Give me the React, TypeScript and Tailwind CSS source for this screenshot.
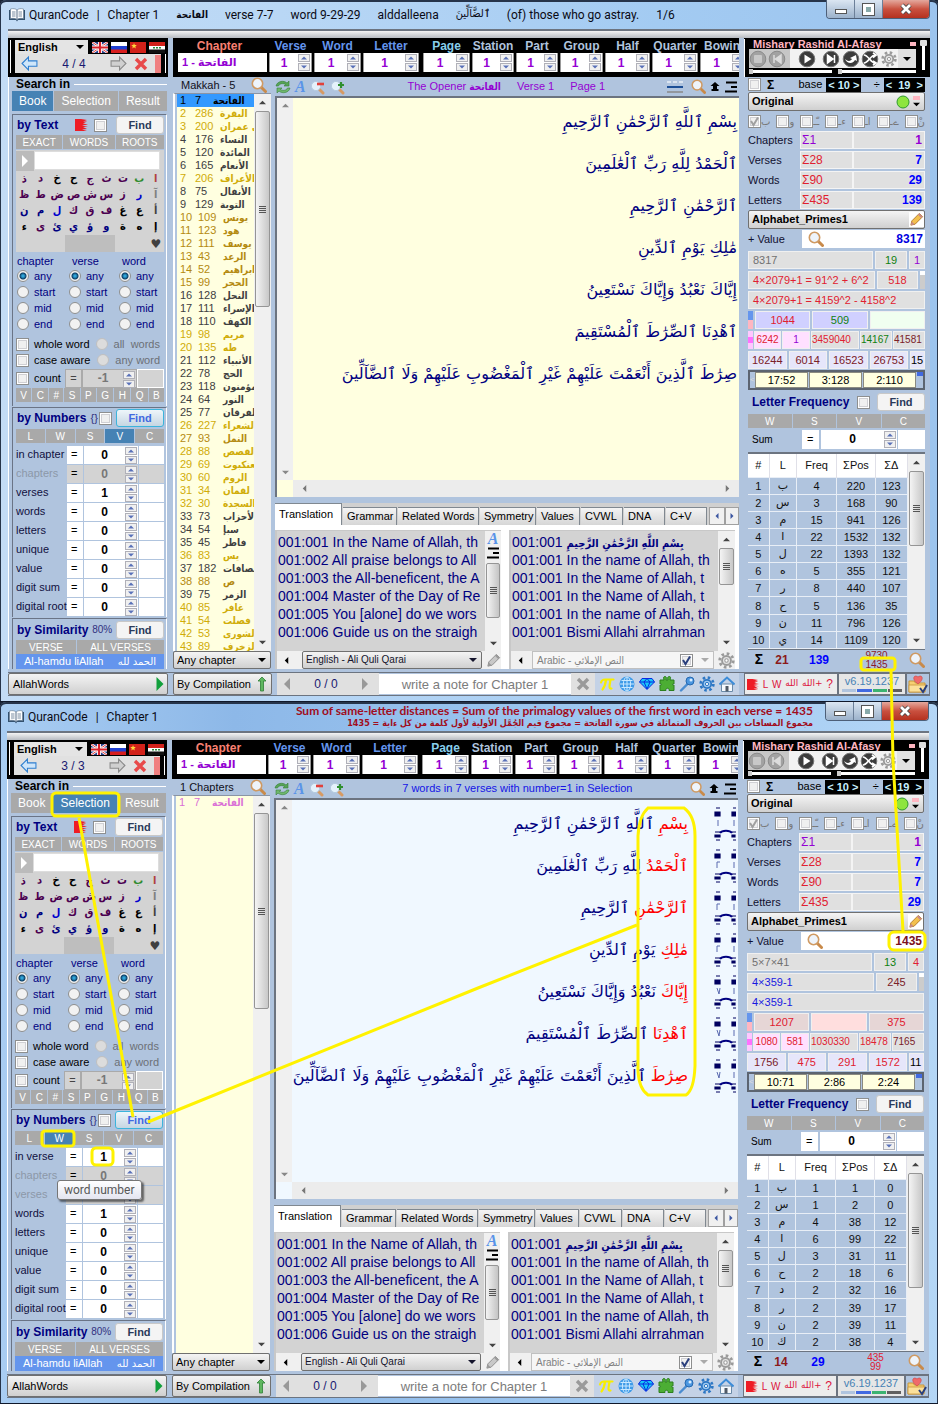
import React from "react";

type Verse = { first: string; rest: string };

const verses: Verse[] = [
  { first: "بِسْمِ", rest: "ٱللَّهِ ٱلرَّحْمَٰنِ ٱلرَّحِيمِ" },
  { first: "ٱلْحَمْدُ", rest: "لِلَّهِ رَبِّ ٱلْعَٰلَمِينَ" },
  { first: "ٱلرَّحْمَٰنِ", rest: "ٱلرَّحِيمِ" },
  { first: "مَٰلِكِ", rest: "يَوْمِ ٱلدِّينِ" },
  { first: "إِيَّاكَ", rest: "نَعْبُدُ وَإِيَّاكَ نَسْتَعِينُ" },
  { first: "ٱهْدِنَا", rest: "ٱلصِّرَٰطَ ٱلْمُسْتَقِيمَ" },
  { first: "صِرَٰطَ", rest: "ٱلَّذِينَ أَنْعَمْتَ عَلَيْهِمْ غَيْرِ ٱلْمَغْضُوبِ عَلَيْهِمْ وَلَا ٱلضَّآلِّينَ" },
];

type Tone = "sel" | "gold" | "amber" | "dark" | "pink";
type Chapter = [number, number, string, Tone];

const toneClass: Record<Tone, string> = {
  sel: "bg-[#3399ff] text-black",
  gold: "text-[#d0ac08]",
  amber: "text-[#b48a10]",
  dark: "text-[#404040]",
  pink: "text-[#da70d6]",
};

const allChapters: Chapter[] = [
  [1, 7, "الفاتحة", "sel"], [2, 286, "البقرة", "gold"], [3, 200, "آل عمران", "gold"],
  [4, 176, "النساء", "dark"], [5, 120, "المائدة", "dark"], [6, 165, "الأنعام", "dark"],
  [7, 206, "الأعراف", "gold"], [8, 75, "الأنفال", "dark"], [9, 129, "التوبة", "dark"],
  [10, 109, "يونس", "amber"], [11, 123, "هود", "amber"], [12, 111, "يوسف", "amber"],
  [13, 43, "الرعد", "amber"], [14, 52, "ابراهيم", "amber"], [15, 99, "الحجر", "amber"],
  [16, 128, "النحل", "dark"], [17, 111, "الإسراء", "dark"], [18, 110, "الكهف", "dark"],
  [19, 98, "مريم", "gold"], [20, 135, "طه", "gold"], [21, 112, "الأنبياء", "dark"],
  [22, 78, "الحج", "dark"], [23, 118, "المؤمنون", "dark"], [24, 64, "النور", "dark"],
  [25, 77, "الفرقان", "dark"], [26, 227, "الشعراء", "gold"], [27, 93, "النمل", "amber"],
  [28, 88, "القصص", "gold"], [29, 69, "العنكبوت", "gold"], [30, 60, "الروم", "gold"],
  [31, 34, "لقمان", "gold"], [32, 30, "السجدة", "gold"], [33, 73, "الأحزاب", "dark"],
  [34, 54, "سبإ", "dark"], [35, 45, "فاطر", "dark"], [36, 83, "يس", "gold"],
  [37, 182, "الصافات", "dark"], [38, 88, "ص", "amber"], [39, 75, "الزمر", "dark"],
  [40, 85, "غافر", "gold"], [41, 54, "فصلت", "gold"], [42, 53, "الشورى", "gold"],
  [43, 89, "الزخرف", "gold"],
];

type NumRow = { label: string; value: string; off?: boolean };
type Cell = { t: string; c: string };

type Win = {
  id: string;
  top: boolean;
  history: string;
  scope: string;
  unit: string;
  legend: string;
  chapters: Chapter[];
  numbers: NumRow[];
  stats: [string, string, string, string][];
  value: string;
  factors: Cell[][];
  refs: string[];
  freq: [string, number, number, number][];
  totals: [string, string, string, string];
};

const red = "text-[#e02030]";
const green = "text-[#108010]";
const blue = "text-[#1818e0]";
const brown = "text-[#7a2028]";
const grayCell = "bg-[#e0e0e0] ";
const lav = "bg-[#e6e6fa] ";

const win1: Win = {
  id: "w1",
  top: true,
  history: "4 / 4",
  scope: "Book",
  unit: "V",
  legend: "Makkah - 5",
  chapters: allChapters,
  numbers: [
    { label: "in chapter", value: "0" }, { label: "chapters", value: "0", off: true },
    { label: "verses", value: "1" }, { label: "words", value: "0" }, { label: "letters", value: "0" },
    { label: "unique", value: "0" }, { label: "value", value: "0" }, { label: "digit sum", value: "0" },
    { label: "digital root", value: "0" },
  ],
  stats: [
    ["Chapters", "Σ1", "1", "text-[#9400d3]"], ["Verses", "Σ28", "7", "text-[#0000ff]"],
    ["Words", "Σ90", "29", "text-[#0000ff]"], ["Letters", "Σ435", "139", "text-[#0000ff]"],
  ],
  value: "8317",
  factors: [
    [{ t: "8317", c: grayCell + "text-[#707070]" }, { t: "19", c: grayCell + green }, { t: "1", c: grayCell + "text-[#9400d3]" }],
    [{ t: "4×2079+1 = 91^2 + 6^2", c: grayCell + red }, { t: "518", c: grayCell + red }],
    [{ t: "4×2079+1 = 4159^2 - 4158^2", c: grayCell + red }],
    [{ t: "1044", c: "bg-[#d0d0ff] " + red }, { t: "509", c: "bg-[#d0d0ff] " + green }, { t: "", c: "bg-[#f0fff0]" }],
    [{ t: "6242", c: "bg-[#ffe0ff] " + red }, { t: "1", c: "bg-[#ffe0ff] text-[#9400d3]" }, { t: "3459040", c: grayCell + red }, { t: "14167", c: grayCell + green }, { t: "41581", c: grayCell + brown }],
    [{ t: "16244", c: lav + brown }, { t: "6014", c: lav + brown }, { t: "16523", c: lav + brown }, { t: "26753", c: lav + brown }, { t: "15", c: lav + "text-black" }],
  ],
  refs: ["17:52", "3:128", "2:110"],
  freq: [["ب", 4, 220, 123], ["س", 3, 168, 90], ["م", 15, 941, 126], ["ا", 22, 1532, 132], ["ل", 22, 1393, 132], ["ه", 5, 355, 121], ["ر", 8, 440, 107], ["ح", 5, 136, 35], ["ن", 11, 796, 126], ["ي", 14, 1109, 120]],
  totals: ["21", "139", "9730", "1435"],
};

const win2: Win = {
  id: "w2",
  top: false,
  history: "3 / 3",
  scope: "Selection",
  unit: "W",
  legend: "1 Chapters",
  chapters: [[1, 7, "الفاتحة", "pink"]],
  numbers: [
    { label: "in verse", value: "1" }, { label: "chapters", value: "0", off: true },
    { label: "verses", value: "0", off: true }, { label: "words", value: "1" }, { label: "letters", value: "0" },
    { label: "unique", value: "0" }, { label: "value", value: "0" }, { label: "digit sum", value: "0" },
    { label: "digital root", value: "0" },
  ],
  stats: [
    ["Chapters", "Σ1", "1", "text-[#9400d3]"], ["Verses", "Σ28", "7", "text-[#0000ff]"],
    ["Words", "Σ90", "7", "text-[#0000ff]"], ["Letters", "Σ435", "29", "text-[#0000ff]"],
  ],
  value: "1435",
  factors: [
    [{ t: "5×7×41", c: grayCell + "text-[#707070]" }, { t: "13", c: grayCell + green }, { t: "4", c: grayCell + red }],
    [{ t: "4×359-1", c: grayCell + blue }, { t: "245", c: grayCell + brown }],
    [{ t: "4×359-1", c: grayCell + blue }],
    [{ t: "1207", c: "bg-[#e6d6d6] " + red }, { t: "", c: "bg-[#ffdede]" }, { t: "375", c: "bg-[#e6d6d6] " + red }],
    [{ t: "1080", c: "bg-[#ffe0ff] " + red }, { t: "581", c: "bg-[#ffe0ff] " + red }, { t: "1030330", c: grayCell + red }, { t: "18478", c: grayCell + red }, { t: "7165", c: grayCell + brown }],
    [{ t: "1756", c: lav + brown }, { t: "475", c: lav + red }, { t: "291", c: lav + red }, { t: "1572", c: lav + red }, { t: "11", c: lav + "text-black" }],
  ],
  refs: ["10:71", "2:86", "2:24"],
  freq: [["ب", 1, 1, 0], ["س", 1, 2, 0], ["م", 4, 38, 12], ["ا", 6, 99, 22], ["ل", 3, 31, 11], ["ح", 2, 18, 6], ["د", 2, 32, 16], ["ر", 2, 39, 17], ["ن", 2, 39, 11], ["ك", 2, 38, 4]],
  totals: ["14", "29", "435", "99"],
};

/* ---------- icons ---------- */

const Magnifier = ({ className = "size-4" }: { className?: string }) => (
  <svg viewBox="0 0 16 16" className={className} aria-hidden="true">
    <path d="M10 10l4.5 4.5" stroke="#c98a4a" strokeWidth="3" strokeLinecap="round" />
    <circle cx="6.5" cy="6.5" r="5.2" fill="#eef4fb" stroke="#cf9a63" strokeWidth="1.6" />
  </svg>
);

const ZoomGlyph = ({ plus }: { plus?: boolean }) => (
  <svg viewBox="0 0 16 16" className="size-4" aria-hidden="true">
    <path d="M9 10l4 4" stroke="#d79a63" strokeWidth="3" strokeLinecap="round" />
    <circle cx="6" cy="7" r="4.6" fill="#e4f1fb" stroke="#b5cbe0" />
    {plus ? (
      <path d="M8 6h6M11 3v6" stroke="#2f8f2f" strokeWidth="2.2" />
    ) : (
      <path d="M7 5h7" stroke="#e2403a" strokeWidth="2.6" />
    )}
  </svg>
);

const Refresh = () => (
  <svg viewBox="0 0 16 16" className="size-4" aria-hidden="true">
    <path d="M1 7c1-5 8-6 11-3l2-2v5H9l1.600-1.500C8 4 4.500 4.500 3.500 7z" fill="#57a457" stroke="#37803b" strokeWidth=".6" />
    <path d="M15 9c-1 5-8 6-11 3l-2 2V9h5l-1.600 1.500C8 12 11.500 11.500 12.500 9z" fill="#6fb86c" stroke="#37803b" strokeWidth=".6" />
  </svg>
);

const LetterA = () => <span aria-hidden="true" className="font-['Liberation_Serif',serif] text-[16px] leading-4 font-bold text-[#5a94e8] italic">A</span>;

const Indent = () => (
  <svg viewBox="0 0 12 12" className="size-3" aria-hidden="true">
    <path d="M1 1.500h11M6 6h6M0 10.500h12" stroke="#000" strokeWidth="1.800" />
  </svg>
);

const Gear = ({ color = "#9a9a9a", className = "size-4", fill = "#e4e4e4" }: { color?: string; className?: string; fill?: string }) => (
  <svg viewBox="0 0 16 16" className={className} aria-hidden="true">
    <circle cx="8" cy="8" r="6.400" fill="none" stroke={color} strokeWidth="2.600" strokeDasharray="2.500 2.520" />
    <circle cx="8" cy="8" r="4.200" fill={fill} stroke={color} strokeWidth="1.800" />
    <circle cx="8" cy="8" r="1.600" fill="#fff" stroke={color} />
  </svg>
);

const Tri = ({ dir, className = "size-[7px]" }: { dir: "up" | "down" | "left" | "right"; className?: string }) => {
  const d = { up: "M0 6L4 2l4 4z", down: "M0 2l4 4 4-4z", left: "M6 0L2 4l4 4z", right: "M2 0l4 4-4 4z" }[dir];
  return (
    <svg viewBox="0 0 8 8" className={`shrink-0 ${className}`} fill="currentColor" aria-hidden="true">
      <path d={d} />
    </svg>
  );
};

const Pencil = ({ gray }: { gray?: boolean }) => (
  <svg viewBox="0 0 16 16" className="size-[15px]" aria-hidden="true">
    <path d="M2 14l1-4.500L11 1.500l3.500 3.500-8 8z" fill={gray ? "#c8c8c8" : "#f3c04e"} stroke={gray ? "#8c8c8c" : "#b27a2a"} />
    <path d="M2 14l1-4 3 3zM11 1.500l3.500 3.500-1.500 1.500L9.500 3z" fill={gray ? "#999" : "#c98a8a"} />
  </svg>
);

const Flag = ({ kind }: { kind: "uk" | "ru" | "cn" | "iq" }) => (
  <svg viewBox="0 0 16 11" className="h-[11px] w-4" aria-hidden="true">
    {kind === "uk" && (
      <>
        <rect width="16" height="11" fill="#27408b" />
        <path d="M0 0l16 11M16 0L0 11" stroke="#fff" strokeWidth="2.400" />
        <path d="M0 0l16 11M16 0L0 11" stroke="#d22" strokeWidth=".9" />
        <path d="M8 0v11M0 5.500h16" stroke="#fff" strokeWidth="4" />
        <path d="M8 0v11M0 5.500h16" stroke="#d8202a" strokeWidth="2.200" />
      </>
    )}
    {kind === "ru" && (
      <>
        <rect width="16" height="4" fill="#fff" />
        <rect y="4" width="16" height="4" fill="#1f3fd0" />
        <rect y="7.500" width="16" height="3.500" fill="#d81e1e" />
      </>
    )}
    {kind === "cn" && (
      <>
        <rect width="16" height="11" fill="#d2221a" />
        <path d="M4 1l.8 2 2 .1-1.500 1.300.5 2L4 5.300 2.300 6.400l.5-2L1.300 3.100l2-.1z" fill="#ffd83a" />
      </>
    )}
    {kind === "iq" && (
      <>
        <rect width="16" height="4" fill="#d2221a" />
        <rect y="4" width="16" height="4" fill="#fff" />
        <rect y="7.500" width="16" height="3.500" fill="#111" />
        <path d="M4 5.800h8" stroke="#2c8a3c" strokeWidth="1.500" strokeDasharray="2 1" />
      </>
    )}
  </svg>
);

const Arrow = ({ right, fill, stroke }: { right?: boolean; fill: string; stroke: string }) => (
  <svg viewBox="0 0 16 16" className="size-[17px]" aria-hidden="true">
    <path d={right ? "M15 8L9 2v3.500H1v5h8V14z" : "M1 8l6-6v3.500h8v5H7V14z"} fill={fill} stroke={stroke} />
  </svg>
);

const Cross = ({ color, className = "size-[14px]" }: { color: string; className?: string }) => (
  <svg viewBox="0 0 14 14" className={className} aria-hidden="true">
    <path d="M2 2l10 10M12 2L2 12" stroke={color} strokeWidth="3.400" />
  </svg>
);

const RedBadge = ({ className = "h-3 w-[13px]" }: { className?: string }) => (
  <svg viewBox="0 0 13 12" className={className} aria-hidden="true">
    <path d="M0 0h6l6 1-4 1.500h4L8 4.500l5 1-6 1 6 1.500H8l4 2-5 .5 5 1.500H0z" fill="#ee1c25" />
  </svg>
);

const MediaIcon = ({ kind, off }: { kind: "stop" | "prev" | "play" | "next" | "loop" | "mix"; off?: boolean }) => (
  <svg viewBox="0 0 18 18" className="size-[18px]" aria-hidden="true">
    <circle cx="9" cy="9" r="7.800" fill={off ? "#a2a2a2" : "#3c3c3c"} stroke={off ? "#8a8a8a" : "#777"} />
    {kind === "stop" && <rect x="5" y="5" width="8" height="8" rx="1" fill="#c8c8c8" />}
    {kind === "prev" && <path d="M6 5v8M13 5L7.500 9l5.500 4z" fill="#ddd" stroke="#ddd" strokeWidth="1.500" />}
    {kind === "play" && <path d="M6.500 4.500L13.500 9l-7 4.500z" fill="#fff" />}
    {kind === "next" && <path d="M12.500 5v8M5.500 5L11 9l-5.500 4z" fill="#fff" stroke="#fff" strokeWidth="1.500" />}
    {kind === "loop" && <path d="M3 9c3 3 6 2 7 0L8 8l6-3 1 6-2-1c-2 4-8 4-10-1z" fill="#fff" />}
    {kind === "mix" && <path d="M3 5c4 0 7 8 11 8M3 13c4 0 7-8 11-8M12 3l3 2-3 2.500M12 11l3 2-3 2" fill="none" stroke="#fff" strokeWidth="1.700" />}
  </svg>
);

const BookIcon = () => (
  <svg viewBox="0 0 16 14" className="h-[14px] w-4" aria-hidden="true">
    <path d="M0 2h16v10H9l-1 1.500L7 12H0z" fill="#33516e" />
    <path d="M1.500 1C4 .3 6.500.6 8 2v9.500C6.500 10.300 4 10 1.500 10.600zM14.500 1C12 .3 9.500.6 8 2v9.500c1.500-1.200 4-1.500 6.500-.9z" fill="#fff" stroke="#6d8299" strokeWidth=".7" />
    <path d="M3 4h3.500M3 6h3.500M3 8h3.500M9.500 4H13M9.500 6H13M9.500 8H13" stroke="#7a8da2" />
  </svg>
);

/* ---------- shared controls ---------- */

const raised = "border border-[#707070] rounded-[2px] bg-linear-to-b from-[#f4f4f4] to-[#d0d0d0]";

const Check = ({ label, on, off }: { label: string; on?: boolean; off?: boolean }) => (
  <span className="relative inline-flex size-[13px] shrink-0">
    <input type="checkbox" aria-label={label} defaultChecked={on} disabled={off} className="size-[13px] appearance-none border border-[#8e8f8f] bg-[#f0f0f0] shadow-[inset_0_0_0_1px_#fff,inset_0_0_0_2px_#d0d0d4]" />
    {on && (
      <svg viewBox="0 0 13 13" className="pointer-events-none absolute inset-0" aria-hidden="true">
        <path d="M3 6l2.500 4L10 2.500" fill="none" stroke={off ? "#a0a0a0" : "#2a3f7c"} strokeWidth="2" />
      </svg>
    )}
  </span>
);

const Spin = ({ label, value, off, color = "text-black" }: { label: string; value: string; off?: boolean; color?: string }) => (
  <div className={`flex h-full min-w-0 flex-1 items-stretch ${off ? "bg-[#d3d3d3]" : "bg-white"}`}>
    <input aria-label={label} defaultValue={value} disabled={off} className={`w-0 min-w-0 flex-1 bg-transparent text-center text-[12px] font-bold ${off ? "text-[#777]" : color}`} />
    <span className="flex w-[13px] shrink-0 flex-col gap-px py-px pr-px">
      <button aria-label={`${label} up`} className="flex flex-1 items-center justify-center border border-[#b0b0b8] bg-[#f0f0f0] text-[#5870b8]"><Tri dir="up" className="size-[6px]" /></button>
      <button aria-label={`${label} down`} className="flex flex-1 items-center justify-center border border-[#b0b0b8] bg-[#f0f0f0] text-[#5870b8]"><Tri dir="down" className="size-[6px]" /></button>
    </span>
  </div>
);

const Strip = ({ items, active, tall }: { items: string[]; active?: string; tall?: boolean }) => (
  <div className={`flex shrink-0 gap-px ${tall ? "h-5 text-[12px]" : "h-[14px] text-[10px]"}`}>
    {items.map((t) => (
      <button key={t} className={`flex flex-auto items-center justify-center overflow-hidden text-white ${t === active ? "bg-[#4682b4]" : "bg-[#a9a9a9]"}`}>{t}</button>
    ))}
  </div>
);

const FindButton = ({ hot }: { hot?: boolean }) => (
  <button className={`h-[18px] w-12 rounded-[3px] border text-[11px] font-bold ${hot ? "border-[#3cb4dc] bg-linear-to-b from-[#eef6fa] to-[#c6d6e2] text-[#4169e1]" : "border-[#c8c8c8] bg-[#f4f4f4] text-[#2a3a5a]"}`}>Find</button>
);

const ScrollBar = ({ thumb, className = "" }: { thumb: string; className?: string }) => (
  <div className={`flex w-[17px] shrink-0 flex-col items-center bg-[#f0f0f0] text-[#444] ${className}`} aria-hidden="true">
    <span className="flex h-[17px] items-center"><Tri dir="up" /></span>
    <span className={`flex w-[15px] flex-col items-center justify-center gap-px rounded-[2px] border border-[#959595] bg-linear-to-r from-[#f4f4f4] to-[#c8c8c8] ${thumb}`}>
      <i className="h-px w-[7px] bg-[#555]" /><i className="h-px w-[7px] bg-[#555]" /><i className="h-px w-[7px] bg-[#555]" /><i className="h-px w-[7px] bg-[#555]" />
    </span>
    <span className="mt-auto flex h-[17px] items-center"><Tri dir="down" /></span>
  </div>
);

const Combo = ({ label, value, className = "" }: { label: string; value: string; className?: string }) => (
  <div className={`relative flex items-center ${className}`}>
    <select aria-label={label} className="h-full w-full appearance-none bg-transparent pl-[3px] leading-none outline-none">
      <option>{value}</option>
    </select>
    <Tri dir="down" className="pointer-events-none absolute right-1 size-2" />
  </div>
);

/* ---------- title bar ---------- */

const TitleBar = ({ w }: { w: Win }) => (
  <header className="flex h-[29px] shrink-0 items-start">
    <div className="flex h-[29px] min-w-0 flex-1 items-center gap-[17px] pl-px font-['Roboto','DejaVu_Sans',sans-serif] text-[12px] whitespace-nowrap text-[#0a0a14]">
      <h1 className="flex items-center gap-2">
        <span className="flex items-center gap-1"><BookIcon />QuranCode</span>
        <span>|</span>
        <span>Chapter 1</span>
      </h1>
      {w.top ? (
        <>
          <span className="font-['DejaVu_Sans_Condensed','DejaVu_Sans',sans-serif] text-[10px] font-bold">الفاتحة</span>
          <span>verse 7-7</span>
          <span>word 9-29-29</span>
          <span>alddalleena</span>
          <span className="font-['DejaVu_Sans_Condensed','DejaVu_Sans',sans-serif] text-[11px]">ٱلضَّآلِّينَ</span>
          <span>(of) those who go astray.</span>
          <span>1/6</span>
        </>
      ) : (
        <div className="flex flex-1 flex-col items-end pr-3 font-bold text-[#a00d20]">
          <span className="font-['Lato',sans-serif] text-[12px] leading-[13px]">Sum of same-letter distances = Sum of the primalogy values of the first word in each verse = 1435</span>
          <span dir="rtl" className="font-['DejaVu_Sans_Condensed','DejaVu_Sans',sans-serif] text-[9px] leading-[13px]">مجموع المسافات بين الحروف المتماثلة في سورة الفاتحة = مجموع قيم الجُمَّل الأولية لأول كلمة من كل ءاية = 1435</span>
        </div>
      )}
    </div>
    <div className="flex h-[19px] shrink-0 overflow-hidden rounded-b-[4px] border border-t-0 border-[#4d5f78]">
      <button aria-label="Minimize" className="flex w-7 items-center justify-center border-r border-[#6c7f98] bg-linear-to-b from-[#dbe6f2] to-[#9cb2cb]"><i className="mt-1 h-[5px] w-3 border border-[#555] bg-white" /></button>
      <button aria-label="Maximize" className="flex w-7 items-center justify-center border-r border-[#6c7f98] bg-linear-to-b from-[#dbe6f2] to-[#9cb2cb]"><i className="size-[11px] border-[3px] border-white bg-[#8aa] outline outline-[#555]" /></button>
      <button aria-label="Close" className="flex w-[46px] items-center justify-center bg-linear-to-b from-[#e3a89e] via-[#c9503f] to-[#b5311f]">
        <svg viewBox="0 0 14 12" className="h-3 w-[14px]" aria-hidden="true"><path d="M3 2l8 8M11 2l-8 8" stroke="#444" strokeWidth="4.500" /><path d="M3 2l8 8M11 2l-8 8" stroke="#fff" strokeWidth="2.800" /></svg>
      </button>
    </div>
  </header>
);

/* ---------- black tool row ---------- */

const navFields: [string, string, string][] = [
  ["Verse", "w-[45px]", "text-[#6495ed]"], ["Word", "w-[49px]", "text-[#6495ed]"], ["Letter", "w-[58px]", "text-[#6495ed]"],
  ["Page", "w-[49px]", "text-[#87ceeb]"], ["Station", "w-[44px]", "text-[#b0c4de]"], ["Part", "w-[44px]", "text-[#b0c4de]"],
  ["Group", "w-[45px]", "text-[#b0c4de]"], ["Half", "w-[47px]", "text-[#b0c4de]"], ["Quarter", "w-[48px]", "text-[#b0c4de]"],
  ["Bowing", "w-[48px]", "text-[#b0c4de]"],
];

const ToolRow = ({ w }: { w: Win }) => (
  <div className="flex h-[39px] shrink-0 gap-[5px]">
    <div className="w-40 shrink-0 bg-black p-[2px] pb-1">
      <div className="flex h-[14px] items-center gap-[3px] border-l border-white pl-1">
        <Combo label="Language" value="English" className="h-full w-[73px] bg-[#e4e4e4] text-[11px] font-bold" />
        <span className="flex gap-[3px] pl-px"><Flag kind="uk" /><Flag kind="ru" /><Flag kind="cn" /><Flag kind="iq" /></span>
      </div>
      <div className="flex h-[19px] items-center border-x border-white pr-1 pl-1">
        <div className="flex h-full flex-1 items-center justify-between bg-[#e1e1e1] pl-[6px]">
          <button aria-label="Back"><Arrow fill="#cfe6fa" stroke="#2f7fd0" /></button>
          <span className="text-[12px] text-[#191970]">{w.history}</span>
          <span className="flex items-center gap-[7px]">
            <button aria-label="Forward"><Arrow right fill="#d0d0d0" stroke="#8a8a8a" /></button>
            <button aria-label="Clear"><Cross color="#e84a4a" /></button>
            <i className="h-[18px] w-[6px] bg-[#f08080]" />
          </span>
        </div>
      </div>
    </div>
    <div className="flex min-w-0 flex-1 overflow-hidden bg-black pt-px pl-[5px]">
      <div className="flex w-[91px] shrink-0 flex-col">
        <label htmlFor={`${w.id}-chapter`} className="h-[14px] pr-2 text-center text-[12px] leading-[14px] font-bold text-[#fa8072]">Chapter</label>
        <input id={`${w.id}-chapter`} defaultValue="1 - الفاتحة" className="h-[19px] w-[89px] bg-white pl-1 font-['Liberation_Sans','DejaVu_Sans',sans-serif] text-[11px] font-bold text-[#9400d3]" />
      </div>
      {navFields.map(([name, width, color]) => (
        <div key={name} className={`flex shrink-0 flex-col pr-[2px] ${width} ${name === "Letter" ? "mr-[2px]" : ""}`}>
          <span className={`flex h-[14px] text-[12px] leading-[14px] font-bold whitespace-nowrap ${name === "Bowing" ? "pl-1" : "justify-center"} ${color}`}>{name}</span>
          <div className="h-[19px] border-x border-[#999]"><Spin label={name} value="1" color="text-[#9400d3]" /></div>
        </div>
      ))}
    </div>
    <div className="flex w-[186px] shrink-0 bg-black pt-px">
      <div className="flex flex-1 flex-col border-l border-white pl-1">
        <div className="flex h-[10px] items-center justify-between">
          <span className="pl-1 text-[11px] leading-[10px] font-bold whitespace-nowrap text-[#ffb6c1]">Mishary Rashid Al-Afasy</span>
          <i className="h-1 w-[6px] bg-[#ffb6c1]" />
        </div>
        <div className="flex h-[19px] items-center gap-px bg-[#f2f2f2]">
          <span className="flex h-full items-center gap-px bg-[#c6c6c6] pr-1"><button aria-label="Stop"><MediaIcon kind="stop" off /></button><button aria-label="Previous"><MediaIcon kind="prev" off /></button></span>
          <span className="flex flex-1 items-center justify-between pl-[7px]">
            <button aria-label="Play" className="mr-1"><MediaIcon kind="play" /></button>
            <button aria-label="Next"><MediaIcon kind="next" /></button>
            <button aria-label="Repeat"><MediaIcon kind="loop" /></button>
            <button aria-label="Shuffle"><MediaIcon kind="mix" /></button>
            <button aria-label="Player settings"><Gear /></button>
          </span>
          <button aria-label="More" className="flex h-full w-[18px] items-center justify-center bg-[#e0e0e0] text-black"><Tri dir="down" className="size-2" /></button>
        </div>
        <div className="mt-px flex h-1 items-center"><i className="h-[5px] w-1 bg-[#ccc]" /><i className="h-[3px] w-[79px] bg-white" /><i className="ml-[6px] h-[5px] w-1 bg-[#ccc]" /><i className="h-[3px] flex-1 bg-white" /></div>
      </div>
      <div className="flex w-[14px] flex-col items-center pt-px"><i className="h-[6px] w-[7px] rounded-[1px] bg-[#ddd]" /><i className="h-[24px] w-[3px] bg-white" /></div>
    </div>
  </div>
);

/* ---------- left column ---------- */

const purple = "text-[#4b0050]";
const navy = "text-[#000080]";
const letterRows: [string, string][][] = [
  [["ذ", purple], ["د", purple], ["خ", "text-black"], ["ح", "text-black"], ["ج", purple], ["ث", purple], ["ت", purple], ["ب", "text-[#2e8b2e]"], ["ا", "text-[#b04040]"]],
  [["ظ", purple], ["ط", purple], ["ض", purple], ["ص", purple], ["ش", purple], ["س", purple], ["ز", purple], ["ر", "text-[#0000cd]"], ["آ", "text-[#808080]"]],
  [["ن", navy], ["م", navy], ["ل", "text-[#0000cd]"], ["ك", purple], ["ق", purple], ["ف", purple], ["غ", "text-black"], ["ع", "text-black"], ["أ", "text-[#404040]"]],
  [["ء", "text-black"], ["ى", purple], ["ئ", navy], ["ي", navy], ["ؤ", navy], ["و", navy], ["ة", "text-black"], ["ه", "text-black"], ["إ", "text-black"]],
];

const RadioGroup = ({ name, win }: { name: string; win: string }) => (
  <fieldset className="flex min-w-0 flex-col text-[11px] text-[#000080]">
    <legend className={`h-[14px] leading-[14px] ${name === "chapter" ? "" : "pl-[3px]"}`}>{name}</legend>
    {["any", "start", "mid", "end"].map((o) => (
      <label key={o} className="flex h-4 items-center gap-[5px] whitespace-nowrap">
        <input type="radio" name={`${win}-${name}`} defaultChecked={o === "any"} className="size-3 appearance-none rounded-full border border-[#8e8f8f] bg-[#f2f2f2] checked:bg-[radial-gradient(circle,#2fa4d8_0_1px,#0d3f66_3px,#f2f2f2_4px)]" />
        {o}
      </label>
    ))}
  </fieldset>
);

const panel = "shrink-0 border-t border-l border-t-[#6a7486] border-l-[#6a7486] border-r border-r-white pl-[3px] pr-[2px]";
const heading = "text-[12px] font-bold text-[#000080] whitespace-nowrap";

const LeftColumn = ({ w }: { w: Win }) => (
  <section className="flex w-40 shrink-0 flex-col border-l border-white pr-px pl-[3px]">
    <h2 className="flex h-[14px] items-center gap-1 pl-1 text-[12px] leading-[14px] font-bold text-black">Search in<i className="h-px flex-1 bg-white" /></h2>
    <Strip tall items={["Book", "Selection", "Result"]} active={w.scope} />

    <div className={`mt-[3px] h-[292px] ${panel}`}>
      <div className="flex h-5 items-center justify-between pl-px">
        <h3 className={heading}>by Text</h3>
        <span className="flex items-center gap-[6px] pl-2"><RedBadge /><Check label="Text option" /></span>
        <FindButton />
      </div>
      <Strip items={["EXACT", "WORDS", "ROOTS"]} />
      <div className="bg-[#d3d3d3]">
        <div className="mt-px flex h-[21px] items-center">
          <button aria-label="Run" className="flex h-5 w-[18px] items-center justify-center bg-[#bbb] text-white"><Tri dir="right" className="size-3" /></button>
          <input aria-label="Search text" className="h-[19px] w-0 flex-1 border border-[#ddd] bg-white" />
          <i className="w-1" />
        </div>
        {letterRows.map((row, i) => (
          <div key={i} className="grid h-4 grid-cols-9">
            {row.map(([l, c]) => (
              <button key={l} className={`font-['DejaVu_Sans_Condensed','DejaVu_Sans',sans-serif] text-[11px] leading-4 font-bold ${c}`}>{l}</button>
            ))}
          </div>
        ))}
        <div className="grid h-[17px] grid-cols-9 items-center">
          <i className="col-span-3 col-start-4 h-full bg-[#bebebe]" />
          <span className="col-start-9 text-center font-['DejaVu_Sans',sans-serif] text-[12px] leading-4 text-[#404040]">♥</span>
        </div>
      </div>
      <div className="mt-[2px] grid grid-cols-[52px_50px_1fr] pl-px">
        <RadioGroup name="chapter" win={w.id} /><RadioGroup name="verse" win={w.id} /><RadioGroup name="word" win={w.id} />
      </div>
      <div className="mt-1 flex flex-col text-[11px] whitespace-nowrap">
        {[["whole word", "all  words"], ["case aware", "any word"]].map(([a, b]) => (
          <div key={a} className="flex h-4 items-center justify-between pr-1">
            <label className="flex items-center gap-[5px]"><Check label={a} />{a}</label>
            <label className="flex items-center gap-[6px] whitespace-pre text-[#6c7076]">
              <input type="radio" disabled name={`${w.id}-match`} className="size-3 appearance-none rounded-full border border-[#c0c0c0] bg-[#dcdcdc]" />{b}
            </label>
          </div>
        ))}
      </div>
      <div className="flex h-5 items-center text-[11px]">
        <label className="flex w-[49px] items-center gap-[5px]"><Check label="count" />count</label>
        <span className="flex h-[19px] w-[17px] items-center justify-center border border-[#aaa] bg-[#d3d3d3] text-[#444]">=</span>
        <div className="h-[19px] w-[55px] border border-[#aaa]"><Spin label="Count value" value="-1" off /></div>
        <i className="h-[19px] flex-1 border border-white bg-[#d3d3d3]" />
      </div>
      <Strip items={["V", "C", "#", "S", "P", "G", "H", "Q", "B"]} />
    </div>

    <div className={`relative mt-px h-[210px] ${panel}`}>
      <div className="flex h-5 items-center justify-between pl-px">
        <h3 className={heading}>by Numbers</h3>
        <span className="flex items-center gap-px text-[11px] text-[#303080]">{"{}"}<Check label="Numbers option" /></span>
        <FindButton hot />
      </div>
      <div className="mt-px mb-[2px] flex h-[14px] gap-px text-[10px]">
        {["L", "W", "S", "V", "C"].map((t) => (
          <button key={t} className={`flex-1 text-white ${t === w.unit ? "bg-[#4682b4]" : "bg-[#a9a9a9]"}`}>{t}</button>
        ))}
      </div>
      {w.numbers.map((r) => (
        <div key={r.label} className="flex h-[19px] items-center text-[11px]">
          <span className={`w-[51px] whitespace-nowrap ${r.off ? "text-[#8c98a8]" : "text-[#101040]"}`}>{r.label}</span>
          <select aria-label={`${r.label} comparison`} disabled={r.off} className={`h-[18px] w-4 appearance-none pl-1 text-black opacity-100 ${r.off ? "bg-[#d3d3d3]" : "bg-white"}`}><option>=</option></select>
          <div className={`ml-px h-[18px] w-[54px] ${r.off ? "bg-[#d3d3d3]" : "bg-white"}`}><Spin label={r.label} value={r.value} off={r.off} /></div>
          <i className={`ml-px h-[18px] flex-1 ${r.off ? "bg-[#d3d3d3]" : "bg-white"}`} />
        </div>
      ))}
      {!w.top && (
        <div role="tooltip" className="absolute top-[70px] left-[45px] z-10 flex h-5 items-center rounded-[3px] border border-[#767676] bg-linear-to-b from-white to-[#e4e5f0] px-[6px] font-['Roboto',sans-serif] text-[12px] whitespace-nowrap text-[#575757] shadow-[2px_2px_2px_#0008]">word number</div>
      )}
    </div>

    <div className={`mt-px h-[51px] ${panel}`}>
      <div className="flex h-[21px] items-center justify-between pl-px">
        <h3 className={heading}>by Similarity</h3>
        <span className="text-[10px] text-[#303080]">80%</span>
        <FindButton />
      </div>
      <Strip items={["VERSE", "ALL VERSES"]} />
      <div className="flex h-[15px] items-center justify-between bg-[#6495ed] px-2 text-[11px] text-white">
        <span>Al-hamdu liAllah</span><span className="font-['DejaVu_Sans',sans-serif] text-[10px]">الحمد لله</span>
      </div>
    </div>
  </section>
);

/* ---------- chapter column ---------- */

const ChapterColumn = ({ w }: { w: Win }) => (
  <section className="flex w-[99px] shrink-0 flex-col pr-px">
    <div className="flex h-4 items-center justify-between pr-1 pl-2 text-[11px] whitespace-nowrap text-[#101020]">
      <h2>{w.legend}</h2><button aria-label="Find chapter"><Magnifier /></button>
    </div>
    <div className="flex flex-1 basis-0 overflow-hidden border-t border-l-2 border-[#8a94a4] border-l-white pl-[2px]">
      <ul className="min-w-0 flex-1 overflow-hidden bg-[#ffffe0] text-[11px]">
        {w.chapters.map(([n, v, name, tone]) => (
          <li key={n} className={`flex h-[13px] items-center gap-[5px] overflow-hidden pl-[3px] leading-[13px] whitespace-nowrap ${toneClass[tone]}`}>
            <span className={n < 10 ? "w-[10px] shrink-0" : "w-[13px] shrink-0"}>{n}</span>
            <span className={v < 10 ? "w-[13px] shrink-0" : "w-5 shrink-0"}>{v}</span>
            <span className="font-['DejaVu_Sans_Condensed','DejaVu_Sans',sans-serif] text-[10px] font-bold">{name}</span>
          </li>
        ))}
      </ul>
      <ScrollBar thumb="h-[196px]" />
    </div>
    <Combo label="Chapter filter" value="Any chapter" className={`h-[18px] shrink-0 text-[11px] ${raised}`} />
  </section>
);

/* ---------- middle column ---------- */

const Ornament = ({ n }: { n: number }) => (
  <svg viewBox="0 0 22 34" className="h-[34px] w-[22px] shrink-0" aria-hidden="true">
    <path d="M2 1h4M1 5h5v4H1zM19 1h3M18 5h4v4h-4zM1 25h5M1 28h5v2H1zM2 33h4M18 25h4M18 28h3v2h-3zM19 33h3" stroke="#000060" strokeWidth="1.200" fill="#000060" />
    <path d="M6 26c2-3 10-3 12 0" fill="none" stroke="#000080" strokeWidth="2" />
    <path d={n === 1 ? "M4 13v6" : n < 5 ? "M3 19v-6h3" : "M3 13l2 6 1-6"} stroke="#5a6ab0" fill="none" />
    <path d="M20 13v6" stroke="#5a6ab0" />
  </svg>
);

const leftLines = [
  "001:001 In the Name of Allah, th", "001:002 All praise belongs to All", "001:003 the All-beneficent, the A",
  "001:004 Master of the Day of Re", "001:005 You [alone] do we wors", "001:006 Guide us on the straigh",
];
const rightLines = [
  "001:001 In the name of Allah, th", "001:001 In the Name of Allah, t", "001:001 In the Name of Allah, t",
  "001:001 In the name of Allah, th", "001:001 Bismi Allahi alrrahman",
];

const MiddleColumn = ({ w }: { w: Win }) => (
  <section className="flex min-w-0 flex-1 flex-col pl-[2px]">
    <div className="flex h-[19px] shrink-0 items-center gap-1">
      <button aria-label="Refresh"><Refresh /></button>
      <button aria-label="Font"><LetterA /></button>
      <button aria-label="Zoom out"><ZoomGlyph /></button>
      <button aria-label="Zoom in"><ZoomGlyph plus /></button>
      <h2 className={`flex flex-1 justify-center gap-4 text-[11px] whitespace-pre ${w.top ? "text-[#9400d3]" : "text-[#1414e6]"}`}>
        {w.top ? (
          <><span>The Opener <span className="font-['DejaVu_Sans_Condensed','DejaVu_Sans',sans-serif] text-[10px] font-bold">الفاتحة</span></span><span>Verse 1</span><span>Page 1</span></>
        ) : (
          <span>7 words in 7 verses with number=1 in Selection</span>
        )}
      </h2>
      {w.top && (
        <svg viewBox="0 0 16 12" className="mr-1 h-3 w-4" aria-hidden="true">
          <path d="M0 1h16" stroke="#e8eef6" strokeWidth="1.500" strokeDasharray="4 2" /><path d="M0 6h16" stroke="#1c4f96" strokeWidth="2" /><path d="M0 11h16" stroke="#888" strokeWidth="1.500" />
        </svg>
      )}
      <button aria-label="Find in text"><Magnifier className="size-[15px]" /></button>
      <svg viewBox="0 0 10 10" className="h-[10px] w-[10px]" aria-hidden="true"><path d="M5 0l4.500 4H7v3h1.500v2h-7V7H3V4H.5z" fill="#000" /></svg>
      <span className="pr-[2px] pl-px"><Indent /></span>
    </div>

    <div className={`flex flex-1 flex-col border-t-2 border-l-2 border-[#6c7480] ${w.top ? "bg-[#ffffe0]" : "bg-[#f0f8ff]"}`}>
      <div className="flex flex-1">
        <div className="flex w-4 shrink-0 flex-col items-center justify-between bg-[#f0f0f0] py-1 text-[#888]"><Tri dir="up" /><Tri dir="down" /></div>
        <ol dir="rtl" className="min-w-0 flex-1 pt-[3px] pr-[2px] font-['DejaVu_Sans',sans-serif] text-[16px] whitespace-nowrap text-[#000080]">
          {verses.map((v, i) => (
            <li key={v.first + i} className="flex h-[42px] items-center gap-[26px]">
              {!w.top && <Ornament n={i + 1} />}
              <span><span className={w.top ? "" : "text-[#ff0000]"}>{v.first}</span> {v.rest}</span>
            </li>
          ))}
        </ol>
      </div>
      <div className="ml-4 flex h-[17px] items-center justify-between bg-[#ececec] px-2 text-[#777]"><Tri dir="left" /><Tri dir="right" /></div>
    </div>

    <div className="mt-[6px] flex h-[22px] shrink-0 items-end gap-px overflow-hidden bg-[#d0d0d0] text-[11px] whitespace-nowrap">
      <button className="h-[22px] w-[67px] border-t border-r border-[#808890] bg-white pl-1 text-left">Translation</button>
      {[["Grammar", "w-[54px]"], ["Related Words", "w-[81px]"], ["Symmetry", "w-[56px]"], ["Values", "w-[43px]"], ["CVWL", "w-[42px]"], ["DNA", "w-[41px]"], ["C+V", "w-[41px]"]].map(([t, width]) => (
        <button key={t} className={`flex h-[18px] items-center border-t border-r border-[#808890] bg-linear-to-b from-[#f4f4f4] to-[#d6d6d6] pl-1 ${width}`}>{t}</button>
      ))}
      <span className="ml-auto flex h-[18px] text-[#3a55a0]">
        <button aria-label="Previous tabs" className="flex w-4 items-center justify-center border border-[#a0a0a0] bg-[#f0f0f0]"><Tri dir="left" className="size-[6px]" /></button>
        <button aria-label="Next tabs" className="flex w-[14px] items-center justify-center border border-[#a0a0a0] bg-[#f0f0f0]"><Tri dir="right" className="size-[6px]" /></button>
      </span>
    </div>
    <div className="flex h-[144px] shrink-0 gap-2 border-r-4 border-white bg-white pt-[5px]">
      <div className="flex min-w-0 flex-1 flex-col border-t border-l-2 border-[#c8c8c8] bg-[#e8e8e8]">
        <div className="flex min-h-0 flex-1">
          <div className="min-w-0 flex-1 overflow-hidden bg-[#d3d3d3] pt-[2px] text-[14px] leading-[18px] whitespace-nowrap text-[#000080]">
            {leftLines.map((l) => <p key={l} className="pl-px">{l}</p>)}
          </div>
          <div className="flex w-4 shrink-0 flex-col items-center bg-[#f0f0f0]">
            <LetterA />
            <Indent />
            <span className="mt-1 flex h-[55px] w-[14px] flex-col items-center justify-center gap-px rounded-[2px] border border-[#959595] bg-linear-to-r from-[#f4f4f4] to-[#c4c4c4]">
              <i className="h-px w-[7px] bg-[#555]" /><i className="h-px w-[7px] bg-[#555]" /><i className="h-px w-[7px] bg-[#555]" /><i className="h-px w-[7px] bg-[#555]" />
            </span>
            <Tri dir="down" className="mt-auto mb-1 size-[7px] text-[#444]" />
          </div>
        </div>
        <div className="flex h-[18px] items-center gap-1 bg-[#f0f0f0] pl-[6px]">
          <Tri dir="left" className="mr-2 size-[7px]" />
          <Combo label="Translation" value="English - Ali Quli Qarai" className={`h-[18px] min-w-0 flex-1 text-[10px] text-[#14142c] ${raised}`} />
          <Pencil gray />
        </div>
      </div>
      <div className="flex min-w-0 flex-1 flex-col border-t border-l-2 border-[#c8c8c8] bg-[#e8e8e8]">
        <div className="flex min-h-0 flex-1">
          <div className="min-w-0 flex-1 overflow-hidden bg-[#d3d3d3] pt-[2px] text-[14px] leading-[18px] whitespace-nowrap text-[#000080]">
            <p className="h-[18px] pl-px">001:001 <span className="font-['DejaVu_Sans_Condensed','DejaVu_Sans',sans-serif] text-[11px] font-bold">بِسْمِ اللَّهِ الرَّحْمَٰنِ الرَّحِيمِ</span></p>
            {rightLines.map((l, i) => <p key={i} className="pl-px">{l}</p>)}
          </div>
          <ScrollBar thumb="h-[37px]" />
        </div>
        <div className="flex h-[18px] items-center gap-1 bg-[#f0f0f0] pl-[6px]">
          <Tri dir="left" className="mr-1 size-[7px]" />
          <div className="flex h-[18px] min-w-0 flex-1 items-center justify-between border border-[#c0c0c0] bg-[#f6f6f6] px-1 text-[10px] text-[#808080]">
            <span className="whitespace-nowrap">Arabic - <span className="font-['DejaVu_Sans_Condensed','DejaVu_Sans',sans-serif]">النص الإملائي</span></span>
            <span className="flex items-center gap-2"><Check label="Show Arabic" on /><Tri dir="down" className="size-2 text-[#aaa]" /></span>
          </div>
          <Gear className="size-[17px]" />
        </div>
      </div>
    </div>
  </section>
);

/* ---------- right column ---------- */

const factorWidths: string[][] = [
  ["flex-1 pl-1", "w-[32px] text-center", "w-[16px] text-center"],
  ["flex-1 pl-1", "w-[41px] text-center"],
  ["flex-1 pl-1"],
  ["flex-1 text-center", "flex-1 text-center", "flex-1 text-center"],
  ["w-[27px] text-center", "w-[28px] text-center", "flex-1", "w-[32px]", "w-[32px]"],
  ["flex-1 text-center", "flex-1 text-center", "flex-1 text-center", "flex-1 text-center", "w-[15px]"],
];

const RightColumn = ({ w }: { w: Win }) => (
  <section className="flex w-[186px] shrink-0 flex-col pr-[5px] pl-1 text-[11px]">
    <div className="flex h-[15px] items-center justify-between">
      <span className="flex items-center gap-[6px]"><Check label="Sum" /><b className="text-[12px]">Σ</b></span>
      <span className="flex items-center gap-1 pl-3">base <b className="bg-black px-[2px] leading-[14px] whitespace-nowrap text-[#c8f0ff]">&lt; 10 &gt;</b></span>
      <span className="flex items-center gap-1">÷ <b className="bg-black px-[2px] leading-[14px] whitespace-pre text-[#c8f0ff]">&lt;  19  &gt;</b></span>
    </div>
    <div className={`flex h-[19px] shrink-0 items-center justify-between pr-1 pl-[3px] font-bold ${raised}`}>
      Original
      <span className="flex items-center gap-[3px]">
        <svg viewBox="0 0 14 14" className="size-[14px]" aria-hidden="true"><circle cx="7" cy="7" r="6" fill="#8ee53f" stroke="#2f9a2f" /></svg>
        <span className="flex flex-col items-center gap-px"><i className="h-1 w-[7px] bg-[#ffb6c1]" /><Tri dir="down" /></span>
      </span>
    </div>
    <div className="mt-[2px] mb-px flex h-4 shrink-0 items-center justify-between font-['DejaVu_Sans',sans-serif] text-[10px] text-[#777]">
      {["ب", "و", "ـّـ", "ءـ", "اـ", "ےـ", "نْ"].map((l, i) => (
        <span key={l} className="flex items-center"><Check label={`Option ${i + 1}`} on={i === 0} off={i === 0} />{l}</span>
      ))}
    </div>
    <div className="flex h-20 shrink-0 flex-col">
      {w.stats.map(([name, sum, val, c], i) => (
        <div key={name} className="flex h-5 items-center text-[11px]">
          <span className="w-[52px] text-[#101030]">{name}</span>
          <output className={`h-[18px] w-[53px] border border-[#f4f4f4] bg-[#e0e0e0] pl-px text-[12px] leading-4 ${i === 0 ? "text-[#9400d3]" : red}`}>{sum}</output>
          <output className={`h-[18px] flex-1 border border-[#f4f4f4] bg-[#e0e0e0] pr-[2px] text-right text-[12px] leading-4 font-bold ${c}`}>{val}</output>
        </div>
      ))}
    </div>
    <div className={`flex h-[19px] shrink-0 items-center justify-between pl-[3px] font-bold ${raised}`}>
      Alphabet_Primes1<button aria-label="Edit" className="bg-white"><Pencil /></button>
    </div>
    <div className="flex h-5 shrink-0 items-center">
      <label htmlFor={`${w.id}-value`} className="w-[54px] whitespace-nowrap text-[#101030]">+ Value</label>
      <div className="flex h-[18px] flex-1 items-center bg-white pl-[6px]">
        <Magnifier />
        <input id={`${w.id}-value`} defaultValue={w.value} className={`w-0 flex-1 pr-[2px] text-right text-[12px] font-bold ${w.top ? "text-[#0000e0]" : "text-[#7a1020]"}`} />
      </div>
    </div>
    <div className="mt-px flex h-[120px] shrink-0 flex-col">
      {w.factors.map((row, r) => (
        <div key={r} className={`flex h-5 items-center ${r === 4 ? "gap-px" : "gap-[2px]"}`}>
          {r === 3 && <i className="h-[18px] w-[5px] border-b-[9px] border-[#ffb6c1] bg-[#6495ed]" />}
          {r === 4 && <i className="h-[18px] w-[5px] border-y-[6px] border-[#ffc8ff] bg-[#ff70ff]" />}
          {row.map((c, i) => (
            <span key={i} className={`h-[18px] min-w-0 border border-[#f0f0f0] leading-4 whitespace-nowrap ${r === 4 ? "text-[10px]" : "text-[11px]"} ${factorWidths[r][i]} ${c.c}`}>{c.t}</span>
          ))}
          {r === 1 && <i className="h-[18px] w-[5px] border-t-4 border-white bg-[#ccc]" />}
        </div>
      ))}
    </div>
    <div className="flex h-5 shrink-0 items-stretch gap-px border-2 border-[#5c6470] text-[11px] text-black">
      <button aria-label="Previous reference" className="w-1 text-[8px] text-[#ddd]">&lt;</button>
      {w.refs.map((t) => <span key={t} className="flex flex-1 items-center justify-center border border-[#8a8a80] bg-[#ffffe0]">{t}</span>)}
      <i className="h-1 w-[6px] bg-[#4169e1]" />
    </div>
    <div className="flex h-6 shrink-0 items-center justify-between pl-1">
      <h3 className={heading}>Letter Frequency</h3><Check label="Frequency option" /><FindButton />
    </div>
    <div className="flex h-[14px] shrink-0 gap-px text-[10px] text-white">
      {["W", "S", "V", "C"].map((t) => <button key={t} className="flex-1 bg-[#a9a9a9]">{t}</button>)}
    </div>
    <div className="mt-px mb-[3px] flex h-5 shrink-0 items-center">
      <span className="w-[54px] pl-1 text-[10px]">Sum</span>
      <select aria-label="Sum comparison" className="h-[19px] w-[17px] appearance-none bg-white pl-[5px]"><option>=</option></select>
      <div className="ml-[2px] h-[19px] w-[76px]"><Spin label="Sum value" value="0" /></div>
      <i className="ml-px h-[19px] flex-1 bg-white" />
    </div>
    <div className="flex flex-1 border-t-2 border-[#6c7480]">
      <table className="flex-1 table-fixed border-collapse text-center text-[12px] text-[#101010]">
        <thead>
          <tr className="h-[23px] bg-white">
            {[["#", "w-[21px]"], ["L", "w-[27px]"], ["Freq", "w-[40px]"], ["ΣPos", "w-[38px]"], ["ΣΔ", "w-8"]].map(([h, width]) => (
              <th key={h} className={`border-r border-[#e0e0e8] p-0 text-[11px] font-normal ${width}`}>{h}</th>
            ))}
          </tr>
        </thead>
        <tbody>
          {w.freq.map(([l, a, b, c], i) => (
            <tr key={l} className="h-[17px] leading-4">
              <td className="border border-l-0 border-[#e8eef6] p-0 text-[11px]">{i + 1}</td>
              <td className="border border-[#e8eef6] p-0 font-['DejaVu_Sans',sans-serif] text-[11px] leading-4">{l}</td>
              <td className="border border-[#e8eef6] p-0 text-[11px]">{a}</td>
              <td className="border border-[#e8eef6] p-0 text-[11px]">{b}</td>
              <td className="border border-[#e8eef6] p-0 text-[11px]">{c}</td>
            </tr>
          ))}
        </tbody>
      </table>
      <ScrollBar thumb={w.top ? "h-[75px]" : "h-[115px]"} className="w-[16px]" />
    </div>
    <div className="flex h-5 shrink-0 items-center border-t border-[#6c7480] text-[12px] font-bold">
      <span className="w-[22px] text-center text-[14px]">Σ</span>
      <span className="w-6 text-center text-[#8b1a1a]">{w.totals[0]}</span>
      <span className="w-[50px] text-center text-[#0000ff]">{w.totals[1]}</span>
      <span className={`flex flex-1 flex-col items-center text-[10px] leading-[9px] font-normal ${w.top ? "text-[#8b1a2a]" : "text-[#e02030]"}`}><span>{w.totals[2]}</span><span>{w.totals[3]}</span></span>
      <Magnifier />
    </div>
  </section>
);

/* ---------- bottom bar ---------- */

const BottomBar = ({ w }: { w: Win }) => (
  <footer className="mt-[3px] flex h-[23px] shrink-0 gap-[5px] border-t border-[#6c7480] bg-[#b0c4de] text-[11px]">
    <div className={`flex w-40 shrink-0 items-center justify-between pl-1 ${raised}`}>AllahWords<button aria-label="Run research" className="text-[#12a03c]"><Tri dir="right" className="size-[14px]" /></button></div>
    <div className={`flex w-[99px] shrink-0 items-center justify-between pr-1 pl-[3px] whitespace-nowrap ${raised}`}>
      By Compilation
      <svg viewBox="0 0 10 16" className="h-4 w-[10px]" aria-hidden="true"><path d="M5 1l4 4H6.500v10h-3V5H1z" fill="#5fb760" stroke="#2f7f36" strokeWidth=".8" /></svg>
    </div>
    <div className="flex min-w-0 flex-1 items-center">
      <div className="flex h-full w-[102px] shrink-0 items-center justify-between bg-[#e0e0e0] px-1 text-[12px] text-[#191970]">
        <button aria-label="Previous note" className="text-[#999]"><Tri dir="left" className="size-3" /></button>0 / 0<button aria-label="Next note" className="pr-1 text-[#999]"><Tri dir="right" className="size-3" /></button>
      </div>
      <input aria-label="Note" placeholder="write a note for Chapter 1" className="h-[20px] w-0 flex-1 bg-white text-center text-[13px] placeholder:text-[#7c7c7c]" />
      <button aria-label="Delete note" className="flex h-full w-6 items-center justify-center bg-[#e0e0e0]"><Cross color="#9a9a9a" /></button>
      <div className="flex h-full shrink-0 items-center gap-1 bg-[#c4d2e6] pr-1 pl-1">
        <svg viewBox="0 0 16 16" className="size-4" aria-hidden="true"><path d="M2 6.500C3 3.500 4 3.500 6 3.500h8.500M7 4C6.500 8 5.500 11 3.500 13.500M11.500 4C10.500 9 9.500 13 12.500 12.500" fill="none" stroke="#f8ee00" strokeWidth="2.200" strokeLinecap="round" /></svg>
        <svg viewBox="0 0 16 16" className="size-4" aria-hidden="true"><circle cx="8" cy="8" r="7.500" fill="#3f9be8" /><path d="M1 8h14M8 1v14M2.500 4.500h11M2.500 11.500h11" stroke="#c8e8ff" /><ellipse cx="8" cy="8" rx="3.600" ry="7" fill="none" stroke="#c8e8ff" /></svg>
        <svg viewBox="0 0 16 16" className="size-4" aria-hidden="true"><path d="M3 2.500h10L15.500 6 8 13.500.5 6z" fill="#18c8f8" stroke="#0a28e0" /><path d="M.5 6h15M5 6l3 7 3-7-3-3.500z" fill="none" stroke="#0a28e0" /></svg>
        <svg viewBox="0 0 16 16" className="size-4" aria-hidden="true"><path d="M1 4h4c-1-3 0-3.500 1-3.500S8 1.500 7 4h2c-1-2.500 0-3.500 1.300-3.500S12 1.500 11 4h4v4c-2-1-2 2 0 1v5.500h-5c1-3-4-3-3 0H1V9c2 1 2-2 0-1z" fill="#4cae34" stroke="#2c7f1e" /></svg>
        <svg viewBox="0 0 16 16" className="size-4" aria-hidden="true"><path d="M2 14.500L9 7.500" stroke="#4a8cd0" strokeWidth="2.400" strokeLinecap="round" /><circle cx="11" cy="5" r="4" fill="#4a96e0" stroke="#2568b0" /><circle cx="12" cy="4" r="1.500" fill="#d8ecff" /></svg>
        <Gear color="#2d77c4" fill="#9cc8f0" />
        <svg viewBox="0 0 16 16" className="size-4" aria-hidden="true"><path d="M2.500 8h11v7.500h-11z" fill="#f6fafe" stroke="#6a8aa8" /><path d="M0.500 8.500L8 1.500l7.500 7" fill="none" stroke="#3c8cd8" strokeWidth="2" /><rect x="6.500" y="10" width="3" height="5.500" fill="#505a66" /></svg>
      </div>
    </div>
    <div className="flex w-[186px] shrink-0 items-center border border-[#6c7480]">
      <div className="flex h-full flex-1 items-center justify-between bg-[#ececec] pr-1 pl-[2px] text-[10px] whitespace-nowrap text-[#dc143c]">
        <RedBadge className="h-[13px] w-3" /><span>L</span><span>W</span><span className="font-['DejaVu_Sans',sans-serif] text-[9px]">الله</span><span className="font-['DejaVu_Sans',sans-serif] text-[9px]">الله+</span><span className="text-[12px]">?</span>
      </div>
      <div className="flex h-full w-[70px] flex-col items-center border-x-2 border-[#6c7480] bg-[#e6e6e6] px-[3px]">
        <span className="text-[11px] leading-[15px] text-[#4682b4]">v6.19.1237</span>
        <span className="flex h-[3px] w-full gap-px"><i className="flex-1 bg-[#b0c4de]" /><i className="flex-1 bg-[#4169e1]" /><i className="flex-1 bg-[#3cb371]" /><i className="flex-1 bg-[#606060]" /></span>
      </div>
      <svg viewBox="0 0 20 20" className="h-5 w-[22px]" aria-hidden="true">
        <path d="M1 7h5l1.500 2H17v9H1z" fill="#f6cf72" stroke="#c8963a" /><path d="M10 10C3 5 6 0 10 3c4-3 7 2 0 7z" fill="#f06a6a" stroke="#d04848" strokeWidth=".7" /><path d="M1 11h17l-1.500 7H1z" fill="#fbe09a" stroke="#c8963a" strokeWidth=".8" /><path d="M12 14l3 4 4-7" fill="none" stroke="#2a3f7c" strokeWidth="2" />
      </svg>
    </div>
  </footer>
);

const frameTop = "pl-2 pr-2 bg-[linear-gradient(90deg,#c3dcf6_0%,#b9d7f5_30%,#a3cbf2_70%,#9cc4ee_100%)]";
const frameBottom = "pl-[7px] pr-[9px] bg-[linear-gradient(90deg,#a9cdf2_0%,#8db8e8_25%,#9cc6f0_60%,#b4d6f6_100%)]";

const AppWindow = ({ w }: { w: Win }) => (
  <article className={`flex flex-col overflow-hidden rounded-t-[6px] border-b border-b-[#10182a] pb-[5px] shadow-[inset_0_2px_0_#26344a,inset_1px_0_0_#26344a,inset_-1px_0_0_#26344a] ${w.top ? frameTop : frameBottom}`}>
    <TitleBar w={w} />
    <div className="flex flex-col border-t-2 border-b border-[#6c7480] bg-[#b0c4de]">
      <div className="h-[7px] shrink-0 bg-linear-to-b from-[#f4f4f4] to-[#b8bcc2]" />
      <ToolRow w={w} />
      <div className="flex gap-[5px]">
        <LeftColumn w={w} />
        <div className="flex min-w-0 flex-1 gap-px">
          <ChapterColumn w={w} />
          <MiddleColumn w={w} />
        </div>
        <RightColumn w={w} />
      </div>
      <BottomBar w={w} />
    </div>
  </article>
);

/* Yellow marker strokes that link the related figures in both windows. */
const Markers = () => (
  <svg viewBox="0 0 938 1406" className="pointer-events-none absolute top-0 left-0 z-20 h-[1406px] w-[938px]" fill="none" stroke="#fff200" strokeWidth="3" aria-hidden="true">
    <rect x="861" y="658" width="34" height="12" rx="3" />
    <path d="M891 670L893 760 903 931" />
    <rect x="889" y="932" width="36" height="18" rx="5" />
    <rect x="52" y="793" width="67" height="23" rx="4" />
    <path d="M79 818L133 1117M148 1122L478 988 637 925" />
    <path d="M648 808h36q11 8 11 28v230q-1 24-9 29h-38q-9-6-10-24V836q1-20 10-28z" />
    <rect x="42" y="1131" width="32" height="15" rx="3" />
    <rect x="92" y="1148" width="21" height="17" rx="4" />
  </svg>
);

export default function App() {
  return (
    <main className="relative overflow-hidden bg-[#1c2638] font-['Liberation_Sans','DejaVu_Sans',sans-serif] text-black">
      <AppWindow w={win1} />
      <AppWindow w={win2} />
      <Markers />
    </main>
  );
}
